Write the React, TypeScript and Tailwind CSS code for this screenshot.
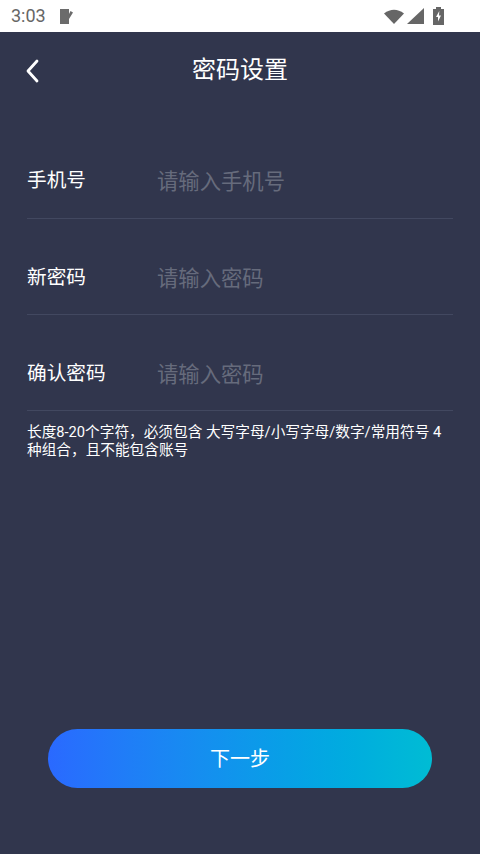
const font = "font-['Roboto','Noto_Sans_CJK_SC',sans-serif]";

function Row({ label, placeholder, h, pt }: { label: string; placeholder: string; h: string; pt: string }) {
  return (
    <div className={`${h} ${pt} flex items-start border-b border-[#424860]`}>
      <div className="w-[130px] text-[19.67px] leading-[28px] text-white">{label}</div>
      <div className="text-[21.33px] leading-[30px] text-[#666b7c]">{placeholder}</div>
    </div>
  );
}

export default function App() {
  return (
    <div className={`${font} w-[480px] h-[854px] flex flex-col bg-[#31364d]`}>
      <div className="h-[32px] bg-white flex items-center justify-between pl-[11px] pr-[36px] shrink-0">
        <div className="flex items-center gap-[14px]">
          <span className="text-[18px] leading-[20px] text-[#666666] font-['Roboto',sans-serif]">3:03</span>
          <svg width="13" height="15" viewBox="0 0 13 15">
            <path d="M0 0H9V5L10.500 2 13 3.500 9 10V15H0Z" fill="#6b6b6b" />
          </svg>
        </div>
        <div className="flex items-center">
          <svg width="20" height="15" viewBox="0 0 20 15">
            <path d="M0 4.500Q10-3 20 4.500L10 15Z" fill="#666" />
          </svg>
          <svg width="17" height="16" viewBox="0 0 17 16" className="ml-[3px]">
            <path d="M0 16L17 0V16Z" fill="#666" />
          </svg>
          <svg width="11" height="18" viewBox="0 0 11 18" className="ml-[9px]">
            <path d="M3 0H8V2H11V18H0V2H3Z" fill="#666" />
            <path d="M6.300 4L3 10H5V14.500L8 8.500H6Z" fill="#fff" />
          </svg>
        </div>
      </div>

      <div className="relative h-[76px] shrink-0 flex items-start justify-center pt-[21px]">
        <svg width="14" height="24" viewBox="0 0 14 24" className="absolute left-[25px] top-[27px]">
          <path d="M12 2L3 12L12 22" fill="none" stroke="#fff" strokeWidth="2.800" strokeLinecap="round" strokeLinejoin="round" />
        </svg>
        <h1 className="text-[24px] leading-[34px] font-normal text-white">密码设置</h1>
      </div>

      <div className="mx-[27px] mt-[36px] flex flex-col">
        <Row label="手机号" placeholder="请输入手机号" h="h-[75px]" pt="pt-[23px]" />
        <Row label="新密码" placeholder="请输入密码" h="h-[96px]" pt="pt-[45px]" />
        <Row label="确认密码" placeholder="请输入密码" h="h-[96px]" pt="pt-[45px]" />
      </div>

      <p className="mx-[27px] mt-[12px] text-[14.67px] leading-[18px] text-white">
        长度8-20个字符，必须包含 大写字母/小写字母/数字/常用符号 4种组合，且不能包含账号
      </p>

      <button className="mx-[48px] mt-[270px] h-[59px] rounded-full bg-gradient-to-r from-[#2a69ff] to-[#00bcd4] text-[20px] text-white">
        下一步
      </button>
    </div>
  );
}
